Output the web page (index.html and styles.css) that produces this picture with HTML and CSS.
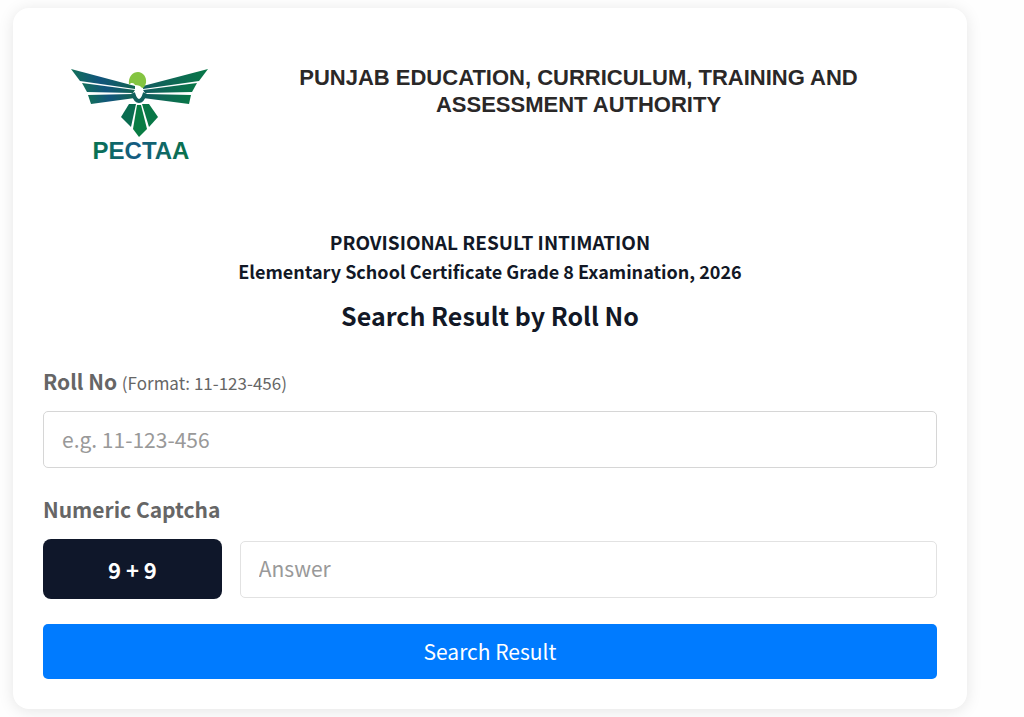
FILE: index.html
```html
<!DOCTYPE html>
<html lang="en">
<head>
  <meta charset="UTF-8">
  <meta name="viewport" content="width=device-width, initial-scale=1.0">
  <title>PECTAA - Search Result</title>
  <link rel="stylesheet" href="styles.css">
</head>
<body>
  <main class="card">
    <header class="header">
      <svg class="logo" viewBox="0 0 160 115" role="img" aria-label="PECTAA">
        <defs>
          <linearGradient id="leftWing" x1="0" x2="1">
            <stop offset="0" stop-color="#127059"/>
            <stop offset="0.45" stop-color="#11547c"/>
            <stop offset="1" stop-color="#126451"/>
          </linearGradient>
          <linearGradient id="rightWing" x1="0" x2="1">
            <stop offset="0" stop-color="#125b60"/>
            <stop offset="1" stop-color="#087747"/>
          </linearGradient>
          <linearGradient id="brand" x1="0" x2="1">
            <stop offset="0" stop-color="#08734f"/>
            <stop offset="0.45" stop-color="#155b83"/>
            <stop offset="1" stop-color="#087348"/>
          </linearGradient>
        </defs>
        <!-- wings -->
        <g fill="url(#leftWing)">
          <path d="M11 14 L75 31 L75 34 L20 26 Z"/>
          <path d="M22 28 L75 35 L73 38 L27 37 Z"/>
          <path d="M28 40 L72 39 L75 43 L31 49 Z"/>
        </g>
        <g fill="url(#rightWing)">
          <path d="M148 14 L83 31 L83 34 L139 26 Z"/>
          <path d="M137 28 L83 35 L85 38 L132 37 Z"/>
          <path d="M131 40 L86 39 L83 43 L129 49 Z"/>
        </g>
        <!-- head and neck -->
        <path fill="#84c441" d="M69 30 C68 21 73 17 78 17 C83 17 87 22 86 28 C85 31 84 33 82 33 C81 31 78 30 75 30 C74 28 71 27 69 30 Z"/>
        <path fill="none" stroke="#11605d" stroke-width="4" d="M73 38 C74 41 75 46 79 46 C83 46 84 41 85 38"/>
        <!-- tail -->
        <path fill="#0a6c50" d="M69 49 L76 49 L71 72 L61 62 Z"/>
        <path fill="#087c43" d="M77 50 L81 50 L87 74 L79 82 L73 74 Z"/>
        <path fill="#087746" d="M82 49 L89 49 L98 62 L89 72 Z"/>
        <text class="logo-text" x="81" y="104" text-anchor="middle" fill="url(#brand)">PECTAA</text>
      </svg>
      <h1 class="authority">PUNJAB EDUCATION, CURRICULUM, TRAINING AND ASSESSMENT AUTHORITY</h1>
    </header>

    <section class="intro">
      <p class="notice">PROVISIONAL RESULT INTIMATION</p>
      <p class="exam">Elementary School Certificate Grade 8 Examination, 2026</p>
      <h2 class="title">Search Result by Roll No</h2>
    </section>

    <form class="search-form">
      <div class="field">
        <label for="rollNo">Roll No <span class="hint">(Format: 11-123-456)</span></label>
        <input class="input" type="text" id="rollNo" placeholder="e.g. 11-123-456">
      </div>
      <div class="field">
        <label for="captcha">Numeric Captcha</label>
        <div class="captcha-row">
          <div class="captcha">9 + 9</div>
          <input class="input" type="text" id="captcha" placeholder="Answer" inputmode="numeric">
        </div>
      </div>
      <button class="submit" type="submit">Search Result</button>
    </form>
  </main>
</body>
</html>
```
FILE: styles.css
```css
* {
  box-sizing: border-box;
}
body {
  margin: 0;
  padding: 8px 57px 8px 13px;
  background: #fefefe;
  color: #121826;
  font-family: "Noto Sans CJK SC", "Open Sans", sans-serif;
}
h1,
h2,
p {
  margin: 0;
}
.card {
  padding: 47px 30px 30px;
  background: #fff;
  border-radius: 16px;
  box-shadow: 0 2px 16px rgba(0, 0, 0, 0.1);
}
.header {
  display: flex;
  align-items: flex-start;
  gap: 32px;
  padding: 0 32px 0 17px;
}
.logo {
  flex: none;
  width: 160px;
}
.logo-text {
  font: bold 24px "Liberation Sans", Arial, sans-serif;
}
.authority {
  flex: 1;
  padding-top: 9px;
  color: #2a2828;
  font: bold 22px/27px "Liberation Sans", Arial, sans-serif;
  text-align: center;
}
.intro {
  margin-top: 58px;
  text-align: center;
  font-weight: 700;
}
.notice {
  font-size: 19px;
  line-height: 28px;
}
.exam {
  font-size: 18px;
  line-height: 30px;
}
.title {
  margin-top: 10px;
  font-size: 25px;
  line-height: 38px;
}
.search-form {
  display: flex;
  flex-direction: column;
  gap: 25px;
  margin-top: 31px;
}
.field label {
  display: block;
  margin-bottom: 12px;
  color: #666;
  font-size: 21px;
  font-weight: 700;
  line-height: 32px;
}
.field .hint {
  font-size: 17px;
  font-weight: 400;
}
.input {
  display: block;
  width: 100%;
  height: 57px;
  padding: 0 18px 2px;
  border: 1px solid #d6d6d6;
  border-radius: 5px;
  background: #fff;
  color: #444;
  font-family: inherit;
  font-size: 21px;
}
.input::placeholder {
  color: #999;
}
.captcha-row {
  display: flex;
  align-items: center;
  gap: 18px;
  padding-top: 2px;
}
.captcha-row .input {
  border-color: #e2e2e2;
}
.captcha {
  flex: 0 0 20%;
  border-radius: 8px;
  background: #0f172a;
  color: #fff;
  font-size: 22px;
  font-weight: 700;
  line-height: 60px;
  text-align: center;
}
.submit {
  height: 55px;
  padding-bottom: 3px;
  border: none;
  border-radius: 5px;
  background: #007bff;
  color: #fff;
  font-family: inherit;
  font-size: 21px;
  cursor: pointer;
}
```
